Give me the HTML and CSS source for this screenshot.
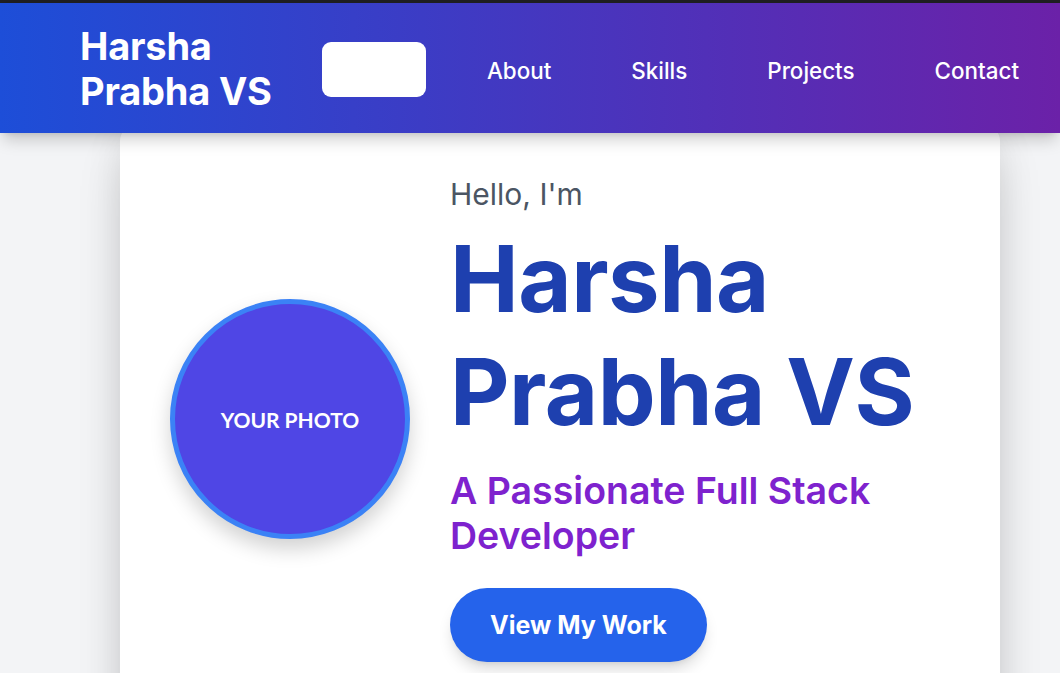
FILE: index.html
```html
<!DOCTYPE html>
<html lang="en">
<head>
<meta charset="UTF-8">
<title>Harsha Prabha VS</title>
<link rel="stylesheet" href="styles.css">
</head>
<body>
<div class="topstrip"></div>
<header class="site-header">
  <div class="logo">Harsha<br>Prabha VS</div>
  <div class="logo-box"></div>
  <nav class="nav">
    <a href="#about">About</a>
    <a href="#skills">Skills</a>
    <a href="#projects">Projects</a>
    <a href="#contact">Contact</a>
  </nav>
</header>
<main class="main">
  <section class="hero-card">
    <div class="photo"><span>YOUR PHOTO</span></div>
    <div class="intro">
      <p class="hello">Hello, I'm</p>
      <h1 class="name">Harsha<br>Prabha VS</h1>
      <p class="tagline">A Passionate Full Stack<br>Developer</p>
      <a class="cta" href="#projects">View My Work</a>
    </div>
  </section>
</main>
</body>
</html>
```
FILE: styles.css
```css
* { box-sizing: border-box; }
html, body { margin: 0; padding: 0; }
body {
  background: #f3f4f6;
  font-family: Inter, "Noto Sans", sans-serif;
  height: 673px;
  overflow: hidden;
}
.topstrip { height: 3px; background: #1f1f22; }
.site-header {
  position: relative;
  z-index: 2;
  height: 130px;
  display: flex;
  align-items: center;
  padding: 0 41px 0 80px;
  background: linear-gradient(90deg, #1d4ed8 0%, #6b21a8 100%);
  box-shadow: 0 10px 15px -3px rgba(0,0,0,0.18), 0 4px 6px -4px rgba(0,0,0,0.12);
}
.logo {
  color: #fff;
  font-weight: 700;
  font-size: 38px;
  line-height: 45px;
  letter-spacing: -0.2px;
  margin-top: 2px;
}
.logo-box {
  width: 104px;
  height: 55px;
  margin-left: 50px;
  margin-top: 2px;
  background: #fff;
  border-radius: 9px;
}
.nav {
  margin-left: auto;
  margin-top: 4px;
  display: flex;
  gap: 80px;
}
.nav a {
  color: #fff;
  text-decoration: none;
  font-size: 22.4px;
  font-weight: 500;
}
.main {
  padding: 0 60px 0 120px;
}
.hero-card {
  margin-top: -8px;
  background: #fff;
  border-radius: 16px;
  padding: 51px 50px 60px;
  display: flex;
  align-items: center;
  gap: 40px;
  box-shadow: 0 25px 50px -12px rgba(0,0,0,0.25), 0 0 40px rgba(0,0,0,0.06);
}
.photo {
  flex: none;
  width: 240px;
  height: 240px;
  border-radius: 50%;
  background: #4f46e5;
  border: 5px solid #3b82f6;
  display: flex;
  align-items: center;
  justify-content: center;
  box-shadow: 0 10px 20px rgba(0,0,0,0.18);
}
.photo span {
  color: #fff;
  font-family: Lato, "Open Sans", sans-serif;
  font-weight: 700;
  font-size: 21px;
}
.intro {
  display: flex;
  flex-direction: column;
  align-items: flex-start;
}
.hello {
  margin: 0;
  color: #4b5563;
  font-size: 30px;
  line-height: 36px;
}
.name {
  margin: 10px 0 0;
  color: #1e40af;
  font-weight: 700;
  font-size: 92px;
  line-height: 113px;
  letter-spacing: -0.5px;
}
.tagline {
  margin: 20px 0 0;
  color: #7e22ce;
  font-weight: 600;
  font-size: 37.5px;
  line-height: 45px;
}
.cta {
  margin-top: 30px;
  display: inline-flex;
  align-items: center;
  justify-content: center;
  height: 74px;
  padding: 0 40px;
  border-radius: 999px;
  background: #2563eb;
  color: #fff;
  font-weight: 700;
  font-size: 25px;
  text-decoration: none;
  box-shadow: 0 10px 15px -3px rgba(0,0,0,0.15), 0 4px 6px -4px rgba(0,0,0,0.1);
}
```
